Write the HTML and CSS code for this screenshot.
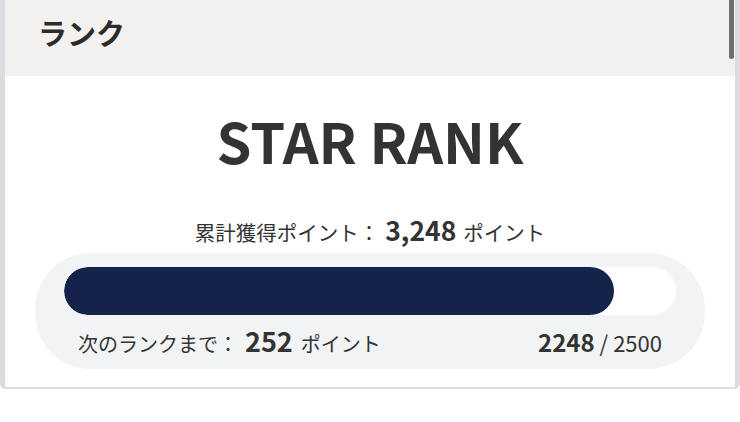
FILE: index.html
```html
<!DOCTYPE html>
<html lang="ja">
<head>
<meta charset="utf-8">
<link rel="stylesheet" href="styles.css">
</head>
<body>
<div class="card">
  <div class="card-head">
    <h2 class="title">ランク</h2>
    <div class="scrollbar"></div>
  </div>
  <div class="card-body">
    <div class="rank-name">STAR RANK</div>
    <div class="total">累計獲得ポイント：<span class="num">3,248</span><span class="unit">ポイント</span></div>
    <div class="progress-box">
      <div class="track"><div class="fill" style="width:89.92%"></div></div>
      <div class="progress-info">
        <div class="next">次のランクまで：<span class="num-lg">252</span><span class="unit">ポイント</span></div>
        <div class="ratio"><span class="num">2248</span> / 2500</div>
      </div>
    </div>
  </div>
</div>
</body>
</html>
```

FILE: styles.css
```css
html, body {
  margin: 0;
  padding: 0;
  background: #ffffff;
}
body {
  font-family: "Noto Sans CJK JP", "Noto Sans", sans-serif;
  color: #333333;
  width: 740px;
  height: 422px;
  overflow: hidden;
}
.card {
  width: 740px;
  box-sizing: border-box;
  border-left: 5px solid #dcdce0;
  border-right: 5px solid #dcdce0;
  border-bottom: 2px solid #dcdce0;
  border-radius: 0 0 6px 6px;
  background: #ffffff;
}
.card-head {
  position: relative;
  height: 76px;
  background: #f2f1ef;
  display: flex;
  align-items: center;
  padding-left: 33px;
}
.title {
  margin: 0;
  font-size: 29px;
  font-weight: 700;
  line-height: 1;
  color: #2b2b2b;
  padding-bottom: 11px;
}
.scrollbar {
  position: absolute;
  right: 1px;
  top: 0;
  width: 5px;
  height: 59px;
  background: #6f6f6f;
  border-radius: 0 0 3px 3px;
}
.card-body {
  padding: 28px 30px 18px 30px;
  display: flex;
  flex-direction: column;
  align-items: center;
}
.rank-name {
  font-size: 56px;
  font-weight: 700;
  line-height: 72px;
  color: #333333;
}
.total {
  margin-top: 39px;
  font-size: 20.5px;
  line-height: 30px;
  display: flex;
  align-items: baseline;
}
.num {
  font-weight: 700;
  font-size: 26.5px;
  margin-left: 6px;
}
.unit {
  margin-left: 7px;
}
.progress-box {
  align-self: stretch;
  background: #f2f3f5;
  border-radius: 56px;
  padding: 14px 29px 10px 29px;
  margin-top: 6px;
}
.track {
  height: 48px;
  background: #ffffff;
  border-radius: 24px;
  overflow: hidden;
}
.fill {
  height: 100%;
  background: #15234a;
  border-radius: 24px;
}
.progress-info {
  display: flex;
  justify-content: space-between;
  align-items: baseline;
  padding: 11px 14px 0 14px;
  font-size: 20px;
  line-height: 30px;
}
.next {
  display: flex;
  align-items: baseline;
}
.num-lg {
  font-weight: 700;
  font-size: 27px;
  margin-left: 7px;
}
.next .unit {
  margin-left: 8px;
}
.ratio {
  font-size: 22px;
}
.ratio .num {
  margin-left: 0;
  font-size: 24px;
}
```
